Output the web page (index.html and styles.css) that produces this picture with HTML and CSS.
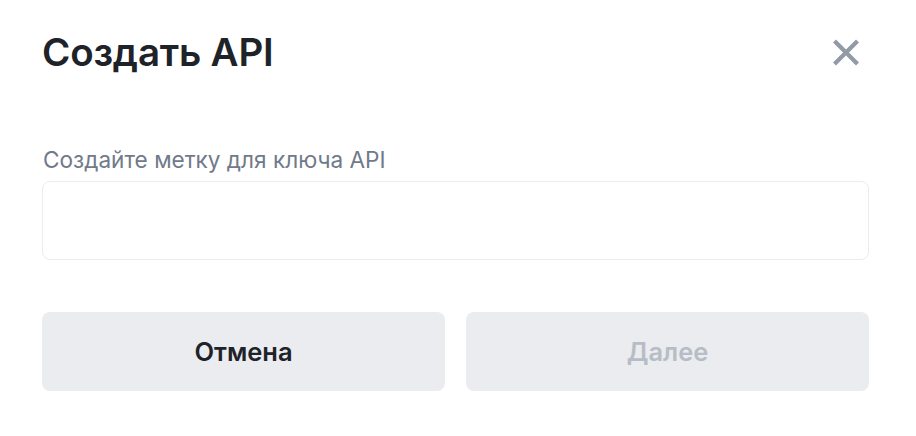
FILE: index.html
```html
<!DOCTYPE html>
<html lang="ru">
<head>
<meta charset="utf-8">
<title>Создать API</title>
<link rel="stylesheet" href="styles.css">
</head>
<body>
<div class="modal">
  <div class="header">
    <h1 class="title">Создать API</h1>
    <button class="close" aria-label="Закрыть">
      <svg width="28" height="29" viewBox="0 0 28 29"><path d="M2.5 3 L25.5 26 M25.5 3 L2.5 26" stroke="#929AA5" stroke-width="4.2" stroke-linecap="butt"/></svg>
    </button>
  </div>
  <div class="field">
    <label class="label" for="key">Создайте метку для ключа API</label>
    <input class="input" id="key" type="text">
  </div>
  <div class="actions">
    <button class="btn">Отмена</button>
    <button class="btn btn-disabled">Далее</button>
  </div>
</div>
</body>
</html>
```
FILE: styles.css
```css
html, body {
  margin: 0;
  padding: 0;
  background: #ffffff;
}
body {
  font-family: Inter, "Noto Sans", "Liberation Sans", sans-serif;
  color: #1E2329;
}
.modal {
  padding: 30px 47px 0 42px;
}
.header {
  display: flex;
  justify-content: space-between;
  align-items: center;
  height: 44px;
}
.title {
  margin: 0;
  font-size: 38.5px;
  font-weight: 600;
  line-height: 44px;
  letter-spacing: -0.2px;
}
.close {
  border: 0;
  background: none;
  padding: 0;
  margin-right: 9px;
  width: 28px;
  height: 29px;
  display: block;
  cursor: pointer;
}
.close svg { display: block; }
.field {
  margin-top: 72px;
  display: flex;
  flex-direction: column;
  gap: 7px;
}
.label {
  font-size: 22.6px;
  line-height: 28px;
  color: #707A8A;
  padding-left: 1px;
}
.input {
  box-sizing: border-box;
  height: 79px;
  border: 1.5px solid #EAECEF;
  border-radius: 8px;
  font: inherit;
  font-size: 20px;
  padding: 0 16px;
  outline: none;
}
.actions {
  margin-top: 52px;
  display: grid;
  grid-template-columns: 1fr 1fr;
  gap: 21px;
}
.btn {
  height: 79px;
  border: 0;
  border-radius: 8px;
  background: #EAECEF;
  font-family: inherit;
  font-size: 25.5px;
  font-weight: 600;
  color: #1E2329;
  cursor: pointer;
}
.btn-disabled {
  color: #B7BDC6;
  cursor: not-allowed;
}
```
